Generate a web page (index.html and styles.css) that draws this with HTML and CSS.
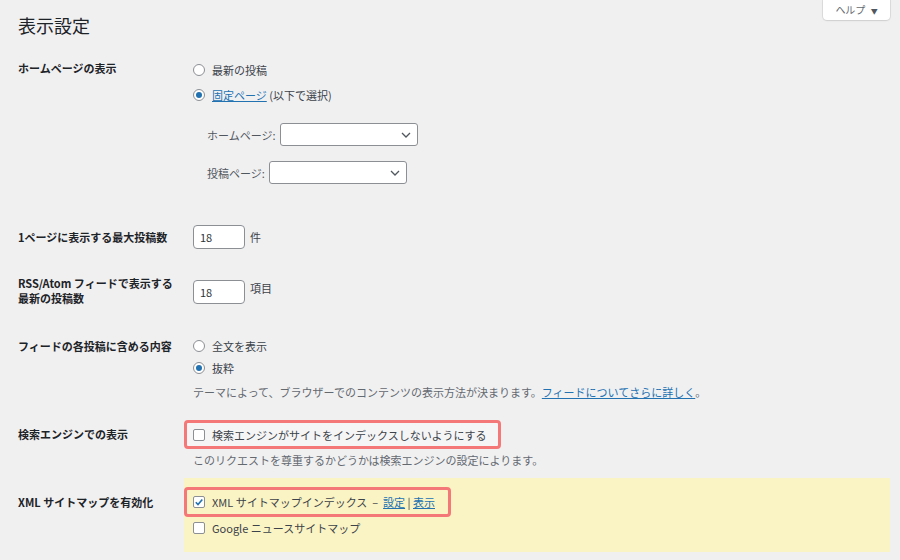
FILE: index.html
```html
<!DOCTYPE html>
<html lang="ja">
<head>
	<meta charset="utf-8">
	<title>表示設定</title>
	<link rel="stylesheet" href="styles.css">
</head>
<body>
	<div class="wrap">
		<div class="page-head">
			<h1>表示設定</h1>
			<button type="button" class="help-tab">ヘルプ <span class="help-arrow">▼</span></button>
		</div>

		<form action="" method="post">
			<div class="form-row row-front">
				<div class="row-label">ホームページの表示</div>
				<div class="row-field">
					<label class="choice"><input type="radio" name="show_on_front" class="radio"> 最新の投稿</label>
					<label class="choice"><input type="radio" name="show_on_front" class="radio" checked> <span><a href="#">固定ページ</a> (以下で選択)</span></label>
					<div class="page-select first">
						<span class="select-label">ホームページ:</span>
						<div class="select"><svg width="10" height="6" viewBox="0 0 10 6"><path d="M1 1l4 4 4-4" fill="none" stroke="#50575e" stroke-width="1.3"/></svg></div>
					</div>
					<div class="page-select second">
						<span class="select-label">投稿ページ:</span>
						<div class="select"><svg width="10" height="6" viewBox="0 0 10 6"><path d="M1 1l4 4 4-4" fill="none" stroke="#50575e" stroke-width="1.3"/></svg></div>
					</div>
				</div>
			</div>

			<div class="form-row row-per-page">
				<div class="row-label">1ページに表示する最大投稿数</div>
				<div class="row-field inline">
					<input type="text" class="small-text" value="18"> <span>件</span>
				</div>
			</div>

			<div class="form-row row-rss">
				<div class="row-label two-line">RSS/Atom フィードで表示する<br>最新の投稿数</div>
				<div class="row-field inline">
					<input type="text" class="small-text" value="18"> <span>項目</span>
				</div>
			</div>

			<div class="form-row row-feed">
				<div class="row-label">フィードの各投稿に含める内容</div>
				<div class="row-field">
					<label class="choice short"><input type="radio" name="rss_use_excerpt" class="radio"> 全文を表示</label>
					<label class="choice short"><input type="radio" name="rss_use_excerpt" class="radio" checked> 抜粋</label>
					<p class="description">テーマによって、ブラウザーでのコンテンツの表示方法が決まります。<a href="#">フィードについてさらに詳しく</a>。</p>
				</div>
			</div>

			<div class="form-row row-search">
				<div class="row-label">検索エンジンでの表示</div>
				<div class="row-field">
					<div class="marked plain">
						<label class="check-line"><span class="checkbox"></span> <span>検索エンジンがサイトをインデックスしないようにする</span></label>
					</div>
					<p class="description">このリクエストを尊重するかどうかは検索エンジンの設定によります。</p>
				</div>
			</div>

			<div class="form-row row-sitemap">
				<div class="row-label">XML サイトマップを有効化</div>
				<div class="row-field sitemap-box">
					<div class="marked">
						<label class="check-line"><span class="checkbox"><svg width="10" height="10" viewBox="0 0 10 10"><path d="M1.8 5.2l2.2 2.3 4.3-5" fill="none" stroke="#2271b1" stroke-width="1.6"/></svg></span> <span>XML サイトマップインデックス &nbsp;– &nbsp;<a href="#">設定</a> | <a href="#">表示</a></span></label>
					</div>
					<label class="check-line news"><span class="checkbox"></span> <span>Google ニュースサイトマップ</span></label>
				</div>
			</div>
		</form>
	</div>
</body>
</html>
```

FILE: styles.css
```css
body {
	margin: 0;
	background: #f0f0f1;
	color: #3c434a;
	font-family: "Noto Sans CJK JP", "Noto Sans", sans-serif;
	font-size: 11px;
}
a { color: #2271b1; }
.wrap { padding: 0 10px 0 18px; }

.page-head {
	display: flex;
	justify-content: space-between;
	align-items: flex-start;
}
h1 {
	margin: 0;
	padding-top: 13px;
	font-size: 18px;
	line-height: 24px;
	font-weight: 400;
	color: #1d2327;
}
.help-tab {
	width: 67px;
	height: 21px;
	margin-top: -1px;
	padding: 0;
	border: 0;
	border-radius: 0 0 4px 4px;
	background: #fff;
	box-shadow: 0 0 0 1px rgba(0, 0, 0, .07), 0 1px 2px rgba(0, 0, 0, .08);
	color: #646970;
	font-family: inherit;
	font-size: 10px;
}
.help-arrow {
	font-size: 7px;
	color: #50575e;
	margin-left: 3px;
}

form { margin-top: 20px; }
.form-row {
	display: grid;
	grid-template-columns: 175px 1fr;
}
.row-label {
	color: #1d2327;
	font-weight: 700;
	line-height: 22px;
}
.row-field.inline {
	display: flex;
	align-items: center;
	gap: 5px;
}

.choice {
	display: flex;
	align-items: center;
	gap: 7px;
	height: 25px;
}
.choice.short { height: 22px; }
.radio {
	appearance: none;
	margin: 0;
	width: 12px;
	height: 12px;
	border: 1px solid #8c8f94;
	border-radius: 50%;
	background: #fff;
	display: grid;
	place-items: center;
}
.radio:checked::before {
	content: "";
	width: 6px;
	height: 6px;
	border-radius: 50%;
	background: #2271b1;
}

.page-select {
	display: flex;
	align-items: center;
	gap: 4px;
	margin-left: 14px;
	color: #50575e;
}
.page-select.first { margin-top: 16px; }
.page-select.second { margin-top: 15px; }
.select {
	box-sizing: border-box;
	width: 138px;
	height: 23px;
	border: 1px solid #8c8f94;
	border-radius: 3px;
	background: #fff;
	display: flex;
	justify-content: flex-end;
	align-items: center;
	padding-right: 6px;
}

.small-text {
	box-sizing: border-box;
	width: 52px;
	height: 24px;
	margin: 0;
	padding: 0 6px;
	border: 1px solid #8c8f94;
	border-radius: 4px;
	background: #fff;
	color: #2c3338;
	font-family: inherit;
	font-size: 11px;
}

.row-per-page { margin-top: 41px; }
.row-per-page .row-label { line-height: 24px; }
.row-rss { margin-top: 27px; }
.row-label.two-line { line-height: 15px; }
.row-rss .row-field { padding-top: 4px; align-items: flex-start; }
.row-feed { margin-top: 29px; }

.description {
	margin: 4px 0 0;
	line-height: 18px;
	color: #646970;
}

.row-search { margin-top: 19px; }
.row-search .row-label { line-height: 29px; }
.row-search .description { margin-top: 2px; }

.marked {
	display: inline-flex;
	align-items: center;
	box-sizing: border-box;
	height: 30px;
	margin-left: -9px;
	padding: 0 13px 0 6px;
	border: 3px solid #f57878;
	border-radius: 4px;
}
.marked.plain {
	height: 29px;
	padding-right: 11px;
	background: #f5f5f6;
}
.check-line {
	display: flex;
	align-items: center;
	gap: 7px;
}
.checkbox {
	box-sizing: border-box;
	width: 12px;
	height: 12px;
	border: 1px solid #8c8f94;
	border-radius: 2px;
	background: #fff;
	display: grid;
	place-items: center;
}

.row-sitemap { margin-top: 9px; }
.row-sitemap .row-label {
	padding-top: 9px;
	line-height: 30px;
}
.sitemap-box {
	margin-left: -9px;
	padding: 9px 0 15px 9px;
	background: #faf3c4;
}
.check-line.news {
	margin-top: 2px;
	line-height: 18px;
}
```
